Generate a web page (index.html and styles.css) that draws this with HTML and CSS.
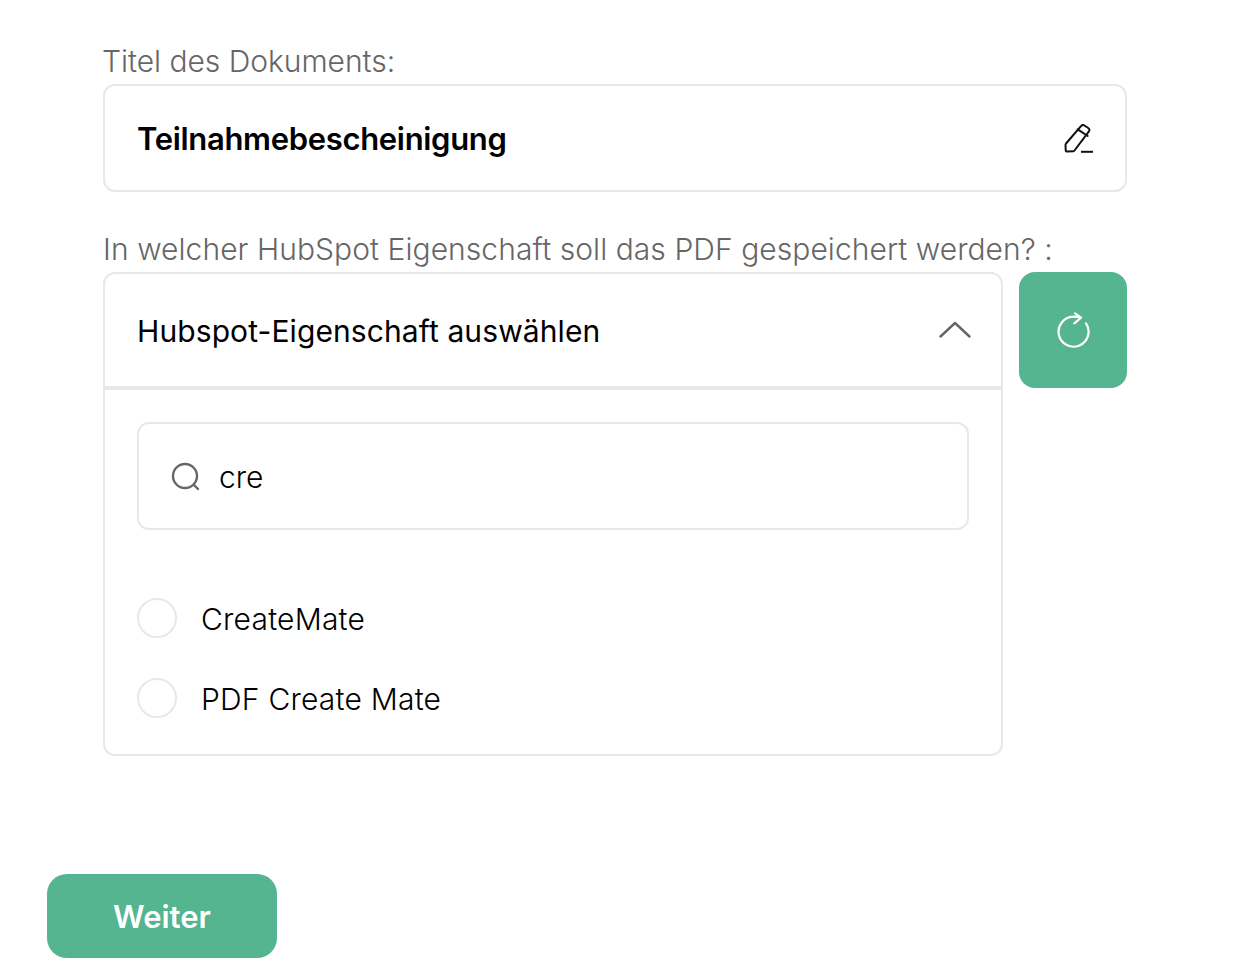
FILE: index.html
```html
<!DOCTYPE html>
<html lang="de">
<head>
<meta charset="utf-8">
<title>Dokument</title>
<link rel="stylesheet" href="styles.css">
</head>
<body>
<main class="page">
  <form class="form">
    <label class="label label-first">Titel des Dokuments:</label>
    <div class="title-box">
      <span class="title-text">Teilnahmebescheinigung</span>
      <svg class="icon-edit" width="32" height="32" viewBox="0 0 32 32" fill="none" stroke="#111" stroke-width="2" stroke-linejoin="round" stroke-linecap="round">
        <path d="M18 2.200c.9-1.200 2.200-1.500 3.400-.7l3.800 2.500c1.200.8 1.500 2.200.7 3.400L11.500 26.500c-.4.500-.8.800-1.400.800L4.500 27.500c-1 0-1.800-.6-1.800-1.600L2.500 21c0-.6.100-1 .5-1.500z"/>
        <path d="M14.700 5.300l10 6.700"/>
        <path d="M18 27.800h12" stroke-linecap="butt"/>
      </svg>
    </div>
    <label class="label label-second">In welcher HubSpot Eigenschaft soll das PDF gespeichert werden? :</label>
    <div class="select-row">
      <div class="select">
        <div class="select-head">
          <span class="select-title">Hubspot-Eigenschaft auswählen</span>
          <svg class="icon-chevron" width="32" height="18" viewBox="0 0 32 18" fill="none" stroke="#666" stroke-width="2.400" stroke-linecap="round" stroke-linejoin="round"><path d="M1.500 15.500L16 2l14.500 13.500"/></svg>
        </div>
        <div class="select-body">
          <div class="search">
            <svg class="icon-search" width="30" height="30" viewBox="0 0 30 30" fill="none" stroke="#666" stroke-width="2.400" stroke-linecap="round"><circle cx="14" cy="14" r="12"/><path d="M23 23l4 4"/></svg>
            <span class="search-text">cre</span>
          </div>
          <ul class="options">
            <li class="option"><span class="radio"></span><span class="option-text">CreateMate</span></li>
            <li class="option"><span class="radio"></span><span class="option-text">PDF Create Mate</span></li>
          </ul>
        </div>
      </div>
      <button class="refresh" type="button" aria-label="Aktualisieren">
        <svg width="34" height="38" viewBox="0 0 34 38" fill="none" stroke="#fff" stroke-width="2.200" stroke-linecap="round" stroke-linejoin="round"><path d="M30 12.300A15 15 0 1 1 17 5.700c3 0 5 0 8 1"/><path d="M19 2.300l6 4.400-6.700 5.600"/></svg>
      </button>
    </div>
  </form>
  <button class="next" type="button">Weiter</button>
</main>
</body>
</html>
```
FILE: styles.css
```css
* { box-sizing: border-box; }
html, body { margin: 0; padding: 0; background: #fff; }
body { font-family: Inter, "Liberation Sans", sans-serif; color: #000; }
.page { width: 1246px; height: 978px; padding: 42px 0 0 47px; overflow: hidden; }
.form { width: 1024px; margin-left: 56px; }
.label { display: block; font-size: 30px; line-height: 38px; font-weight: 300; color: #666; height: 42px; }
.label-first { letter-spacing: -0.03px; text-indent: -1px; }
.label-second { margin-top: 38px; letter-spacing: 0.06px; }
.title-box { height: 108px; border: 2px solid #e8e8e8; border-radius: 12px; display: flex; align-items: center; justify-content: space-between; padding: 0 30px 0 32px; }
.title-text { font-size: 31px; font-weight: 600; letter-spacing: -0.32px; }
.icon-edit { margin-top: 3px; }
.select-row { display: flex; align-items: flex-start; gap: 16px; }
.select { width: 900px; height: 484px; border: 2px solid #e8e8e8; border-radius: 12px; }
.select-head { height: 116px; border-bottom: 4px solid #e8e8e8; display: flex; align-items: center; justify-content: space-between; padding: 2px 30px 0 32px; }
.select-title { font-size: 30px; font-weight: 400; letter-spacing: 0.1px; }
.icon-chevron { margin-top: -2px; }
.select-body { padding: 32px 32px 0; }
.search { height: 108px; border: 2px solid #e8e8e8; border-radius: 12px; display: flex; align-items: center; gap: 18px; padding: 0 32px; }
.icon-search { margin-top: 2px; }
.search-text { font-size: 30px; font-weight: 300; padding-top: 2px; }
.options { list-style: none; margin: 68px 0 0; padding: 0; display: flex; flex-direction: column; gap: 40px; }
.option { display: flex; align-items: center; gap: 24px; height: 40px; font-size: 30px; font-weight: 300; letter-spacing: 0.22px; }
.option-text { padding-top: 2px; }
.radio { width: 40px; height: 40px; border: 2px solid #e8e8e8; border-radius: 50%; }
.refresh { width: 108px; height: 116px; border: 0; border-radius: 16px; background: #54b590; display: flex; align-items: center; justify-content: center; padding: 0; }
.next { display: block; margin-top: 118px; width: 230px; height: 84px; border: 0; border-radius: 20px; padding: 0; background: #54b590; color: #fff; font-family: inherit; font-size: 31px; font-weight: 600; }
```
